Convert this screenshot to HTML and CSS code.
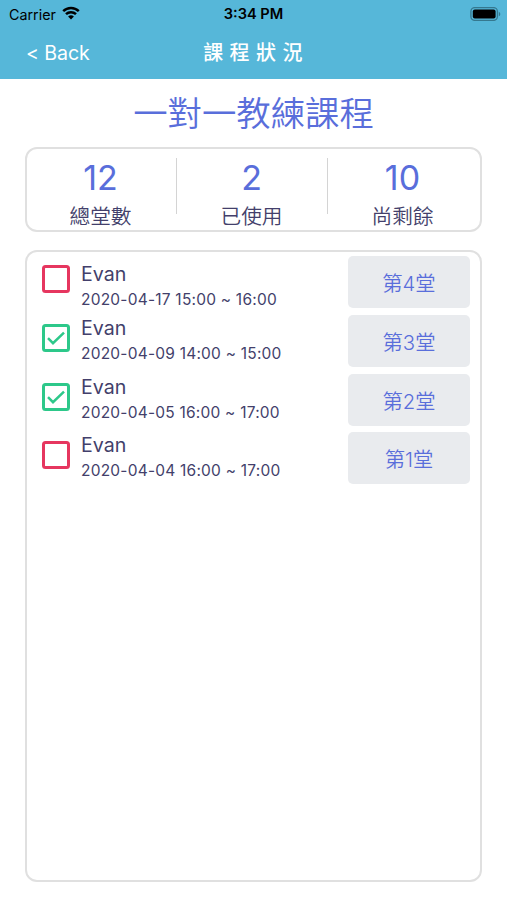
FILE: index.html
```html
<!DOCTYPE html>
<html lang="zh-Hant">
<head>
  <meta charset="UTF-8" />
  <meta name="viewport" content="width=device-width, initial-scale=1.0" />
  <title>課程狀況</title>
  <link rel="stylesheet" href="styles.css">
</head>
<body>
  <header>
    <div class="status-bar">
      <div class="carrier">
        <span>Carrier</span>
        <svg class="wifi" viewBox="0 0 18 14" width="18" height="14">
          <path d="M1.2 5.1a11.2 11.2 0 0 1 15.6 0M4 8.2a7.1 7.1 0 0 1 10 0" fill="none" stroke="#000" stroke-width="2.5" />
          <path d="M9 13.6L6.1 10.6a4.1 4.1 0 0 1 5.8 0z" />
        </svg>
      </div>
      <div class="clock">3:34 PM</div>
      <div class="battery">
        <svg viewBox="0 0 31 14" width="31" height="14">
          <rect x="0.9" y="0.6" width="26.5" height="12.8" rx="3.8" fill="none" stroke="#35788f" stroke-width="1.3" />
          <rect x="2.8" y="2.5" width="22.8" height="9" rx="2" />
          <path d="M28.8 4.7a2.5 2.5 0 0 1 0 4.6z" fill="#35788f" />
        </svg>
      </div>
    </div>
    <nav>
      <a class="back" href="#">&lt; Back</a>
      <h1>課程狀況</h1>
    </nav>
  </header>

  <main>
    <h2>一對一教練課程</h2>

    <section class="summary">
      <div class="stat"><strong>12</strong><span>總堂數</span></div>
      <div class="stat"><strong>2</strong><span>已使用</span></div>
      <div class="stat"><strong>10</strong><span>尚剩餘</span></div>
    </section>

    <section class="lessons">
      <div class="lesson">
        <svg class="check open" viewBox="0 0 28 28"><rect x="1.5" y="1.5" width="25" height="25" rx="2" /></svg>
        <div class="info">
          <div class="name">Evan</div>
          <div class="time">2020-04-17 15:00 ~ 16:00</div>
        </div>
        <button>第4堂</button>
      </div>
      <div class="lesson">
        <svg class="check done" viewBox="0 0 28 28"><rect x="1.5" y="1.5" width="25" height="25" rx="2" /><path d="M6 14.2l5 5L22 8.7" /></svg>
        <div class="info">
          <div class="name">Evan</div>
          <div class="time">2020-04-09 14:00 ~ 15:00</div>
        </div>
        <button>第3堂</button>
      </div>
      <div class="lesson">
        <svg class="check done" viewBox="0 0 28 28"><rect x="1.5" y="1.5" width="25" height="25" rx="2" /><path d="M6 14.2l5 5L22 8.7" /></svg>
        <div class="info">
          <div class="name">Evan</div>
          <div class="time">2020-04-05 16:00 ~ 17:00</div>
        </div>
        <button>第2堂</button>
      </div>
      <div class="lesson">
        <svg class="check open" viewBox="0 0 28 28"><rect x="1.5" y="1.5" width="25" height="25" rx="2" /></svg>
        <div class="info">
          <div class="name">Evan</div>
          <div class="time">2020-04-04 16:00 ~ 17:00</div>
        </div>
        <button>第1堂</button>
      </div>
    </section>
  </main>
</body>
</html>
```
FILE: styles.css
```css
* {
  box-sizing: border-box;
}
body {
  margin: 0;
  height: 900px;
  display: flex;
  flex-direction: column;
  font-family: Inter, "Noto Sans CJK TC", sans-serif;
  background-color: #fff;
  color: #433f6b;
}
header {
  height: 79px;
  background-color: #56b7d9;
}
.status-bar {
  display: grid;
  grid-template-columns: 1fr auto 1fr;
  align-items: center;
  height: 27px;
  padding: 0 6px 0 9px;
  color: #000;
  font-size: 14.3px;
  line-height: 27px;
}
.carrier {
  display: flex;
  align-items: center;
  gap: 6px;
}
.wifi {
  margin-bottom: 2px;
}
.clock {
  margin-right: 3px;
  padding-top: 1px;
  font-size: 14.6px;
  font-weight: 600;
}
.battery {
  display: flex;
  justify-content: flex-end;
  padding-bottom: 1px;
}
nav {
  display: grid;
  grid-template-columns: 1fr auto 1fr;
  align-items: center;
  height: 52px;
  padding: 0 23px 0 26px;
}
.back {
  color: #fff;
  font-size: 19.6px;
  letter-spacing: -0.1px;
  text-decoration: none;
}
h1 {
  margin: 0;
  padding-left: 2px;
  color: #fff;
  font-size: 20px;
  font-weight: 500;
  line-height: 28px;
  letter-spacing: 6.4px;
}
main {
  flex: 1;
  display: flex;
  flex-direction: column;
  padding: 13px 25px 18px;
}
h2 {
  margin: 0 0 11px;
  color: #596edb;
  font-size: 34.4px;
  font-weight: 350;
  line-height: 44px;
  text-align: center;
}
.summary {
  display: flex;
  height: 85px;
  margin-bottom: 18px;
  border: 2px solid #e0e0e0;
  border-radius: 12px;
}
.stat {
  flex: none;
  display: flex;
  flex-direction: column;
  align-items: center;
  width: 151px;
  padding: 9px 4px 0 0;
  background: linear-gradient(#d4d4d4, #d4d4d4) no-repeat right 1px top 9px / 1px 56px;
}
.stat:last-child {
  background: none;
}
.stat strong {
  color: #596edb;
  font-size: 34px;
  font-weight: 400;
  line-height: 39px;
}
.stat span {
  font-size: 20.7px;
  font-weight: 350;
  line-height: 40px;
}
.lessons {
  flex: 1;
  display: flex;
  flex-direction: column;
  gap: 6.7px;
  padding: 4.3px 10px 0 15px;
  border: 2px solid #e0e0e0;
  border-radius: 12px;
}
.lesson {
  display: flex;
  align-items: center;
  height: 52px;
}
.check {
  width: 28px;
  height: 28px;
  margin: 0 11px 6px 0;
  fill: none;
  stroke-width: 3;
}
.check.open {
  stroke: #e6365f;
}
.check.done {
  stroke: #2dc88a;
}
.check path {
  stroke-width: 2.5;
}
.info {
  flex: 1;
  padding-bottom: 3px;
}
.lesson:first-child .info {
  padding: 6px 0 0;
}
.name {
  font-size: 19.6px;
  line-height: 28px;
}
.time {
  font-size: 15.5px;
  line-height: 23px;
  letter-spacing: 0.22px;
}
button {
  width: 122px;
  height: 52px;
  padding: 0;
  border: none;
  border-radius: 5px;
  background-color: #e9ebee;
  color: #596edb;
  font-family: inherit;
  font-size: 20.3px;
  font-weight: 350;
}
```
